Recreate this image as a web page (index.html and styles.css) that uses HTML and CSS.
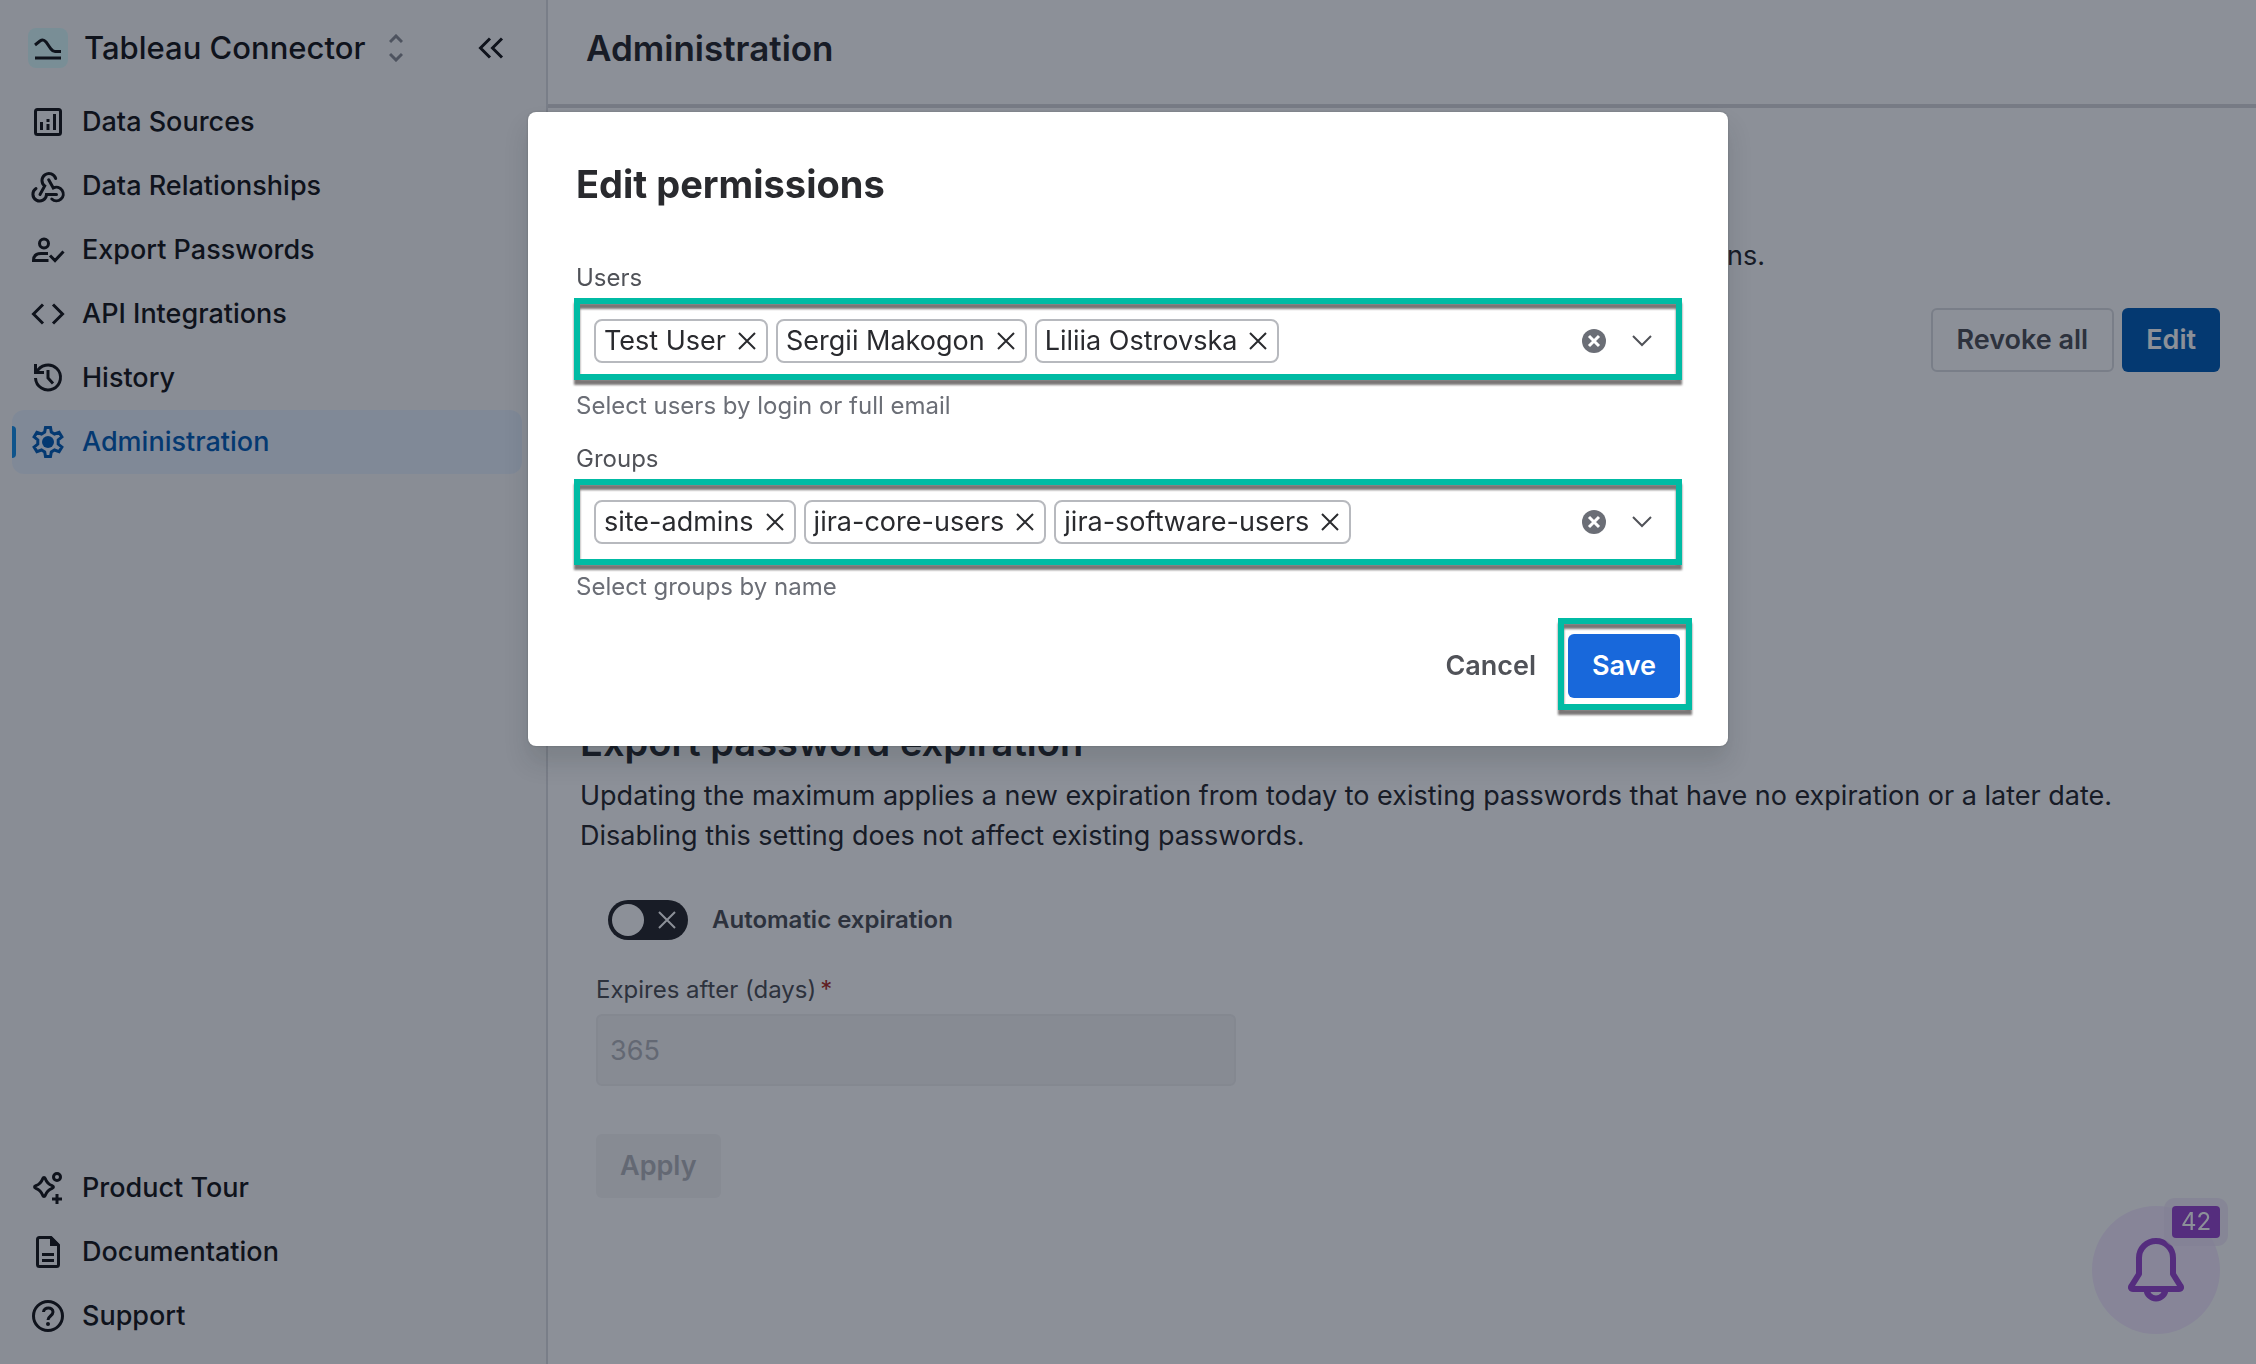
FILE: index.html
```html
<!DOCTYPE html>
<html lang="en">
<head>
  <meta charset="UTF-8">
  <meta name="viewport" content="width=device-width, initial-scale=1.0">
  <title>Tableau Connector - Administration</title>
  <link rel="stylesheet" href="styles.css">
</head>
<body>
  <aside class="sidebar">
    <div class="sidebar-header">
      <span class="logo">
        <svg width="40" height="40" viewBox="0 0 40 40" fill="none" stroke="currentColor" stroke-width="3">
          <path d="M7 17l5-4c2-1.500 4-1.500 6 1l5 7c1.500 2 2.500 2.500 4 2.500h6M7 30h26"/>
        </svg>
      </span>
      <span class="app-name">Tableau Connector</span>
      <button class="icon-button switcher" aria-label="Switch app">
        <svg width="14" height="28" viewBox="0 0 14 28" fill="none" stroke="currentColor" stroke-width="3">
          <path d="M1 8l6-6 6 6M1 20l6 6 6-6"/>
        </svg>
      </button>
      <button class="icon-button collapse" aria-label="Collapse sidebar">
        <svg width="26" height="22" viewBox="0 0 26 22" fill="none" stroke="currentColor" stroke-width="3">
          <path d="M12 1.500L2.500 11l9.500 9.500M24 1.500L14.500 11l9.500 9.500"/>
        </svg>
      </button>
    </div>

    <nav class="nav">
      <a href="#" class="nav-item">
        <svg class="nav-icon" viewBox="0 0 32 32">
          <rect x="3.500" y="3.500" width="25" height="25" rx="2"/>
          <path d="M9.500 16v8M16 18v6M16 13v3M22.500 8v16"/>
        </svg>
        Data Sources
      </a>
      <a href="#" class="nav-item">
        <svg class="nav-icon" viewBox="0 0 32 32" stroke-linecap="round">
          <path d="M8 24.500l4.700-8.500a7 7 0 1 1 11-7.500"/>
          <path d="M16.700 9.700l4.600 8.300a6.800 6.800 0 1 1-1.500 11"/>
          <path d="M4 18.500a6.800 6.800 0 1 0 10.500 6h10"/>
        </svg>
        Data Relationships
      </a>
      <a href="#" class="nav-item">
        <svg class="nav-icon" viewBox="0 0 32 32">
          <circle cx="12" cy="9.500" r="4.500"/>
          <path d="M16 19.500H9c-4.500 0-7.500 2-7.500 7h15M18 21.500l5 5 8.500-9"/>
        </svg>
        Export Passwords
      </a>
      <a href="#" class="nav-item">
        <svg class="nav-icon" viewBox="0 0 32 32">
          <path d="M11 6.500L1.500 16l9.500 9.500M21 6.500L30.500 16 21 25.500"/>
        </svg>
        API Integrations
      </a>
      <a href="#" class="nav-item">
        <svg class="nav-icon" viewBox="0 0 32 32">
          <path d="M3.500 2v8.500H12M4.500 10.500A12.500 12.500 0 1 1 3.500 16M16 8v8l5 5.500"/>
        </svg>
        History
      </a>
      <a href="#" class="nav-item active" aria-current="page">
        <svg class="nav-icon" viewBox="0 0 32 32">
          <path d="M13.500 1.500h5l.800 4.600 3.200 1.900 4.600-1.600 2.800 4.500-3.700 3v4.200l3.700 3-2.800 4.500-4.600-1.600-3.200 1.900-.800 4.600h-5l-.800-4.600L9.500 24l-4.600 1.600-2.800-4.500 3.700-3v-4.200l-3.700-3 2.800-4.500L9.500 8l3.200-1.900z"/>
          <circle cx="16" cy="16" r="6" fill="currentColor" stroke="none"/>
        </svg>
        Administration
      </a>
    </nav>

    <nav class="nav">
      <a href="#" class="nav-item">
        <svg class="nav-icon" viewBox="0 0 32 32">
          <path d="M12 5.500c.800 0 1 .500 1.300 1.200 1.500 4 2.800 5.500 6.800 7 1.800.700 1.800 1.900 0 2.600-4 1.500-5.300 3-6.800 7-.700 1.600-1.900 1.600-2.600 0-1.500-4-2.800-5.500-6.800-7-1.800-.700-1.800-1.900 0-2.600 4-1.500 5.300-3 6.800-7 .300-.700.500-1.200 1.300-1.200z"/>
          <circle cx="25" cy="5" r="3.500"/>
          <path d="M25 22v10M20 27h10"/>
        </svg>
        Product Tour
      </a>
      <a href="#" class="nav-item">
        <svg class="nav-icon" viewBox="0 0 32 32">
          <path d="M5.500 3.500a2 2 0 0 1 2-2H19l7.500 7.500v19.500a2 2 0 0 1-2 2h-17a2 2 0 0 1-2-2zM10 18.500h12M10 24.500h12"/>
          <path d="M18 1h2l7 7v2h-9z" fill="currentColor" stroke="none"/>
        </svg>
        Documentation
      </a>
      <a href="#" class="nav-item">
        <svg class="nav-icon" viewBox="0 0 32 32">
          <circle cx="16" cy="16" r="14.500"/>
          <path d="M11.500 12c.300-5.500 9.500-5.500 9.500 0 0 4-5 4-5 8"/>
          <circle cx="16" cy="24" r="2" fill="currentColor" stroke="none"/>
        </svg>
        Support
      </a>
    </nav>
  </aside>

  <main class="main">
    <header class="page-header">
      <h1>Administration</h1>
    </header>

    <section class="section permissions">
      <p>Only the users and groups added below can manage Tableau Connector and its permissions.</p>
      <div class="actions">
        <button class="button outline">Revoke all</button>
        <button class="button edit">Edit</button>
      </div>
    </section>

    <section class="section">
      <h2>Export password expiration</h2>
      <p>Updating the maximum applies a new expiration from today to existing passwords that have no expiration or a later date.<br>Disabling this setting does not affect existing passwords.</p>
      <form class="expiration-form">
        <label class="toggle">
          <span class="track">
            <input type="checkbox" id="autoExpiration">
            <svg class="cross" viewBox="0 0 18 18"><path d="M1 1l16 16M17 1L1 17"/></svg>
          </span>
          Automatic expiration
        </label>
        <label class="field-label" for="expireDays">Expires after (days)<span class="required">*</span></label>
        <input class="days" type="text" id="expireDays" value="365" disabled>
        <button class="button apply" disabled>Apply</button>
      </form>
    </section>

    <button class="bell" aria-label="Notifications">
      <svg width="56" height="64" viewBox="0 0 56 64" fill="none" stroke="currentColor" stroke-width="6" stroke-linejoin="round">
        <path d="M11 20a17 17 0 0 1 34 0v16l7.500 12c1 1.500.500 3-1.500 3H5c-2 0-2.500-1.500-1.500-3L11 36zM18.500 51a9.500 9.500 0 0 0 19 0"/>
      </svg>
      <span class="badge">42</span>
    </button>
  </main>

  <div class="blanket">
    <div class="modal" role="dialog" aria-modal="true" aria-labelledby="modalTitle">
      <h2 id="modalTitle" class="modal-title">Edit permissions</h2>

      <div class="field">
        <label class="field-label" for="users">Users</label>
        <div class="select highlight">
          <span class="tag">Test User <button class="remove" aria-label="Remove Test User"><svg class="cross" viewBox="0 0 18 18"><path d="M1 1l16 16M17 1L1 17"/></svg></button></span>
          <span class="tag">Sergii Makogon <button class="remove" aria-label="Remove Sergii Makogon"><svg class="cross" viewBox="0 0 18 18"><path d="M1 1l16 16M17 1L1 17"/></svg></button></span>
          <span class="tag">Liliia Ostrovska <button class="remove" aria-label="Remove Liliia Ostrovska"><svg class="cross" viewBox="0 0 18 18"><path d="M1 1l16 16M17 1L1 17"/></svg></button></span>
          <input class="select-input" type="text" id="users">
          <button class="icon-button clear" aria-label="Clear users">
            <svg width="24" height="24" viewBox="0 0 24 24"><circle cx="12" cy="12" r="12" fill="currentColor"/><path d="M7 7l10 10M17 7L7 17" stroke="#fff" stroke-width="3"/></svg>
          </button>
          <button class="icon-button open" aria-label="Open users">
            <svg width="20" height="12" viewBox="0 0 20 12" fill="none" stroke="currentColor" stroke-width="2"><path d="M1 1l9 9 9-9"/></svg>
          </button>
        </div>
        <div class="help">Select users by login or full email</div>
      </div>

      <div class="field">
        <label class="field-label" for="groups">Groups</label>
        <div class="select highlight tall">
          <span class="tag">site-admins <button class="remove" aria-label="Remove site-admins"><svg class="cross" viewBox="0 0 18 18"><path d="M1 1l16 16M17 1L1 17"/></svg></button></span>
          <span class="tag">jira-core-users <button class="remove" aria-label="Remove jira-core-users"><svg class="cross" viewBox="0 0 18 18"><path d="M1 1l16 16M17 1L1 17"/></svg></button></span>
          <span class="tag">jira-software-users <button class="remove" aria-label="Remove jira-software-users"><svg class="cross" viewBox="0 0 18 18"><path d="M1 1l16 16M17 1L1 17"/></svg></button></span>
          <input class="select-input" type="text" id="groups">
          <button class="icon-button clear" aria-label="Clear groups">
            <svg width="24" height="24" viewBox="0 0 24 24"><circle cx="12" cy="12" r="12" fill="currentColor"/><path d="M7 7l10 10M17 7L7 17" stroke="#fff" stroke-width="3"/></svg>
          </button>
          <button class="icon-button open" aria-label="Open groups">
            <svg width="20" height="12" viewBox="0 0 20 12" fill="none" stroke="currentColor" stroke-width="2"><path d="M1 1l9 9 9-9"/></svg>
          </button>
        </div>
        <div class="help">Select groups by name</div>
      </div>

      <div class="modal-footer">
        <button class="button subtle">Cancel</button>
        <span class="highlight save-highlight"><button class="button primary">Save</button></span>
      </div>
    </div>
  </div>
</body>
</html>
```
FILE: styles.css
```css
* {
  box-sizing: border-box;
}

body {
  margin: 0;
  display: flex;
  min-height: 100vh;
  font-family: Inter, "Liberation Sans", sans-serif;
  font-size: 27px;
  line-height: 40px;
  color: #292a2e;
  background: white;
}

h1, h2, p {
  margin: 0;
}

button, input {
  font-family: inherit;
  font-size: inherit;
  line-height: inherit;
}

/* Sidebar */
.sidebar {
  flex: 0 0 548px;
  display: flex;
  flex-direction: column;
  justify-content: space-between;
  padding: 0 24px 16px 12px;
  background: #fafafa;
  border-right: 2px solid #dddee1;
  color: #18181b;
}

.sidebar-header {
  display: flex;
  align-items: center;
  height: 96px;
  padding: 0 18px 0 16px;
}

.logo {
  display: flex;
  background: #dcfcfc;
  border-radius: 8px;
}

.app-name {
  margin-left: 16px;
  font-size: 31px;
  font-weight: 500;
}

.icon-button {
  display: flex;
  padding: 0;
  border: none;
  background: none;
  color: inherit;
  cursor: pointer;
}

.switcher {
  margin-left: 24px;
  color: #8c8f97;
}

.collapse {
  margin-left: auto;
}

.sidebar-header + .nav {
  margin-top: -6px;
  margin-bottom: auto;
}

.nav-item {
  position: relative;
  display: flex;
  align-items: center;
  gap: 18px;
  height: 64px;
  padding-left: 20px;
  border-radius: 12px;
  font-weight: 500;
  color: inherit;
  text-decoration: none;
}

.nav-icon {
  width: 32px;
  height: 32px;
  overflow: visible;
  fill: none;
  stroke: currentColor;
  stroke-width: 3;
}

.nav-item.active {
  background: #e9f2fe;
  color: #055fb7;
}

.nav-item.active::before {
  content: "";
  position: absolute;
  left: 0;
  top: 16px;
  bottom: 16px;
  width: 4px;
  border-radius: 0 4px 4px 0;
  background: #1890e8;
}

/* Page */
.main {
  flex: 1;
}

.page-header {
  display: flex;
  align-items: center;
  height: 108px;
  padding: 0 38px 8px;
  border-bottom: 4px solid #d8d9dd;
}

h1 {
  font-size: 35px;
  font-weight: 600;
}

h2 {
  font-size: 38px;
  line-height: 48px;
  font-weight: 700;
}

.section {
  padding: 0 36px 0 32px;
}

.permissions {
  min-height: 610px;
  padding-top: 128px;
}

.section h2 {
  margin-bottom: 10px;
  font-weight: 600;
}

.actions {
  display: flex;
  justify-content: flex-end;
  gap: 8px;
  margin-top: 32px;
}

.button {
  height: 64px;
  padding: 0 24px;
  border: none;
  border-radius: 6px;
  font-weight: 600;
  cursor: pointer;
}

.outline {
  background: none;
  border: 2px solid #dddee1;
  color: #505258;
}

.edit {
  background: #055fb7;
  color: white;
}

.expiration-form {
  display: flex;
  flex-direction: column;
  align-items: flex-start;
  padding: 44px 0 0 16px;
}

.toggle {
  display: flex;
  align-items: center;
  gap: 24px;
  margin: 0 0 34px 12px;
  font-size: 24px;
  font-weight: 600;
  color: #505258;
}

.track {
  position: relative;
  display: flex;
  align-items: center;
  justify-content: flex-end;
  width: 80px;
  height: 40px;
  padding-right: 12px;
  border-radius: 20px;
  background: #292a2e;
  color: white;
}

.track input {
  appearance: none;
  position: absolute;
  left: 4px;
  width: 32px;
  height: 32px;
  margin: 0;
  border-radius: 50%;
  background: white;
}

.cross {
  display: block;
  width: 18px;
  height: 18px;
  fill: none;
  stroke: currentColor;
  stroke-width: 2;
}

.field-label {
  display: block;
  font-size: 24px;
  line-height: 32px;
  color: #505258;
}

.required {
  margin-left: 4px;
  color: #ae2e24;
}

.days {
  width: 640px;
  height: 72px;
  margin: 8px 0 48px;
  padding: 0 12px;
  border: 2px solid #f0f0f1;
  border-radius: 6px;
  background: #f5f5f6;
  color: #b4b6bb;
}

.apply {
  background: #f5f5f6;
  color: #b4b6bb;
}

.bell {
  position: fixed;
  right: 36px;
  bottom: 30px;
  display: flex;
  align-items: center;
  justify-content: center;
  width: 128px;
  height: 128px;
  border: none;
  border-radius: 50%;
  background: #f5ebff;
  color: #9a48d0;
}

.badge {
  position: absolute;
  top: 0;
  right: 0;
  width: 48px;
  border-radius: 4px;
  background: #9a48d0;
  box-shadow: 0 0 0 8px rgba(240, 228, 250, 0.7);
  color: white;
  font-size: 24px;
  line-height: 32px;
}

/* Modal dialog */
.blanket {
  position: fixed;
  inset: 0;
  display: flex;
  justify-content: center;
  align-items: flex-start;
  padding-top: 112px;
  background: rgba(5, 12, 31, 0.46);
}

.modal {
  width: 1200px;
  padding: 48px;
  border-radius: 8px;
  background: white;
  box-shadow: 0 16px 24px rgba(30, 31, 33, 0.15), 0 0 2px rgba(30, 31, 33, 0.31);
}

.modal-title {
  margin-bottom: 54px;
}

.field {
  margin-bottom: 21px;
}

.select {
  display: flex;
  align-items: center;
  gap: 8px;
  height: 78px;
  margin: 8px 0 10px;
  padding: 0 28px 0 18px;
}

.tag {
  display: flex;
  align-items: center;
  gap: 12px;
  height: 44px;
  padding: 0 10px 0 8px;
  border: 2px solid #b7b9be;
  border-radius: 8px;
}

.remove {
  padding: 0;
  border: none;
  background: none;
  color: inherit;
  cursor: pointer;
}

.select-input {
  flex: 1;
  min-width: 0;
  border: none;
  outline: none;
  background: none;
}

.clear {
  margin-right: 18px;
  color: #6b6e76;
}

.open {
  color: #505258;
}

.help {
  font-size: 24px;
  line-height: 32px;
  color: #6b6e76;
}

/* Green frame drawn around the controls to fill in */
.highlight {
  position: relative;
}

.highlight::after {
  content: "";
  position: absolute;
  inset: -4px -2px 0;
  border: 6px solid #00bba4;
  filter: drop-shadow(0 5px 1px rgba(50, 45, 45, 0.65));
  pointer-events: none;
}

.highlight.tall::after {
  bottom: -4px;
}

.modal-footer {
  display: flex;
  justify-content: flex-end;
  gap: 8px;
  padding-top: 10px;
}

.save-highlight {
  display: flex;
}

.save-highlight::after {
  inset: -16px -12px -12px -10px;
}

.subtle {
  background: none;
  color: #505258;
}

.primary {
  background: #1868db;
  color: white;
}
```
